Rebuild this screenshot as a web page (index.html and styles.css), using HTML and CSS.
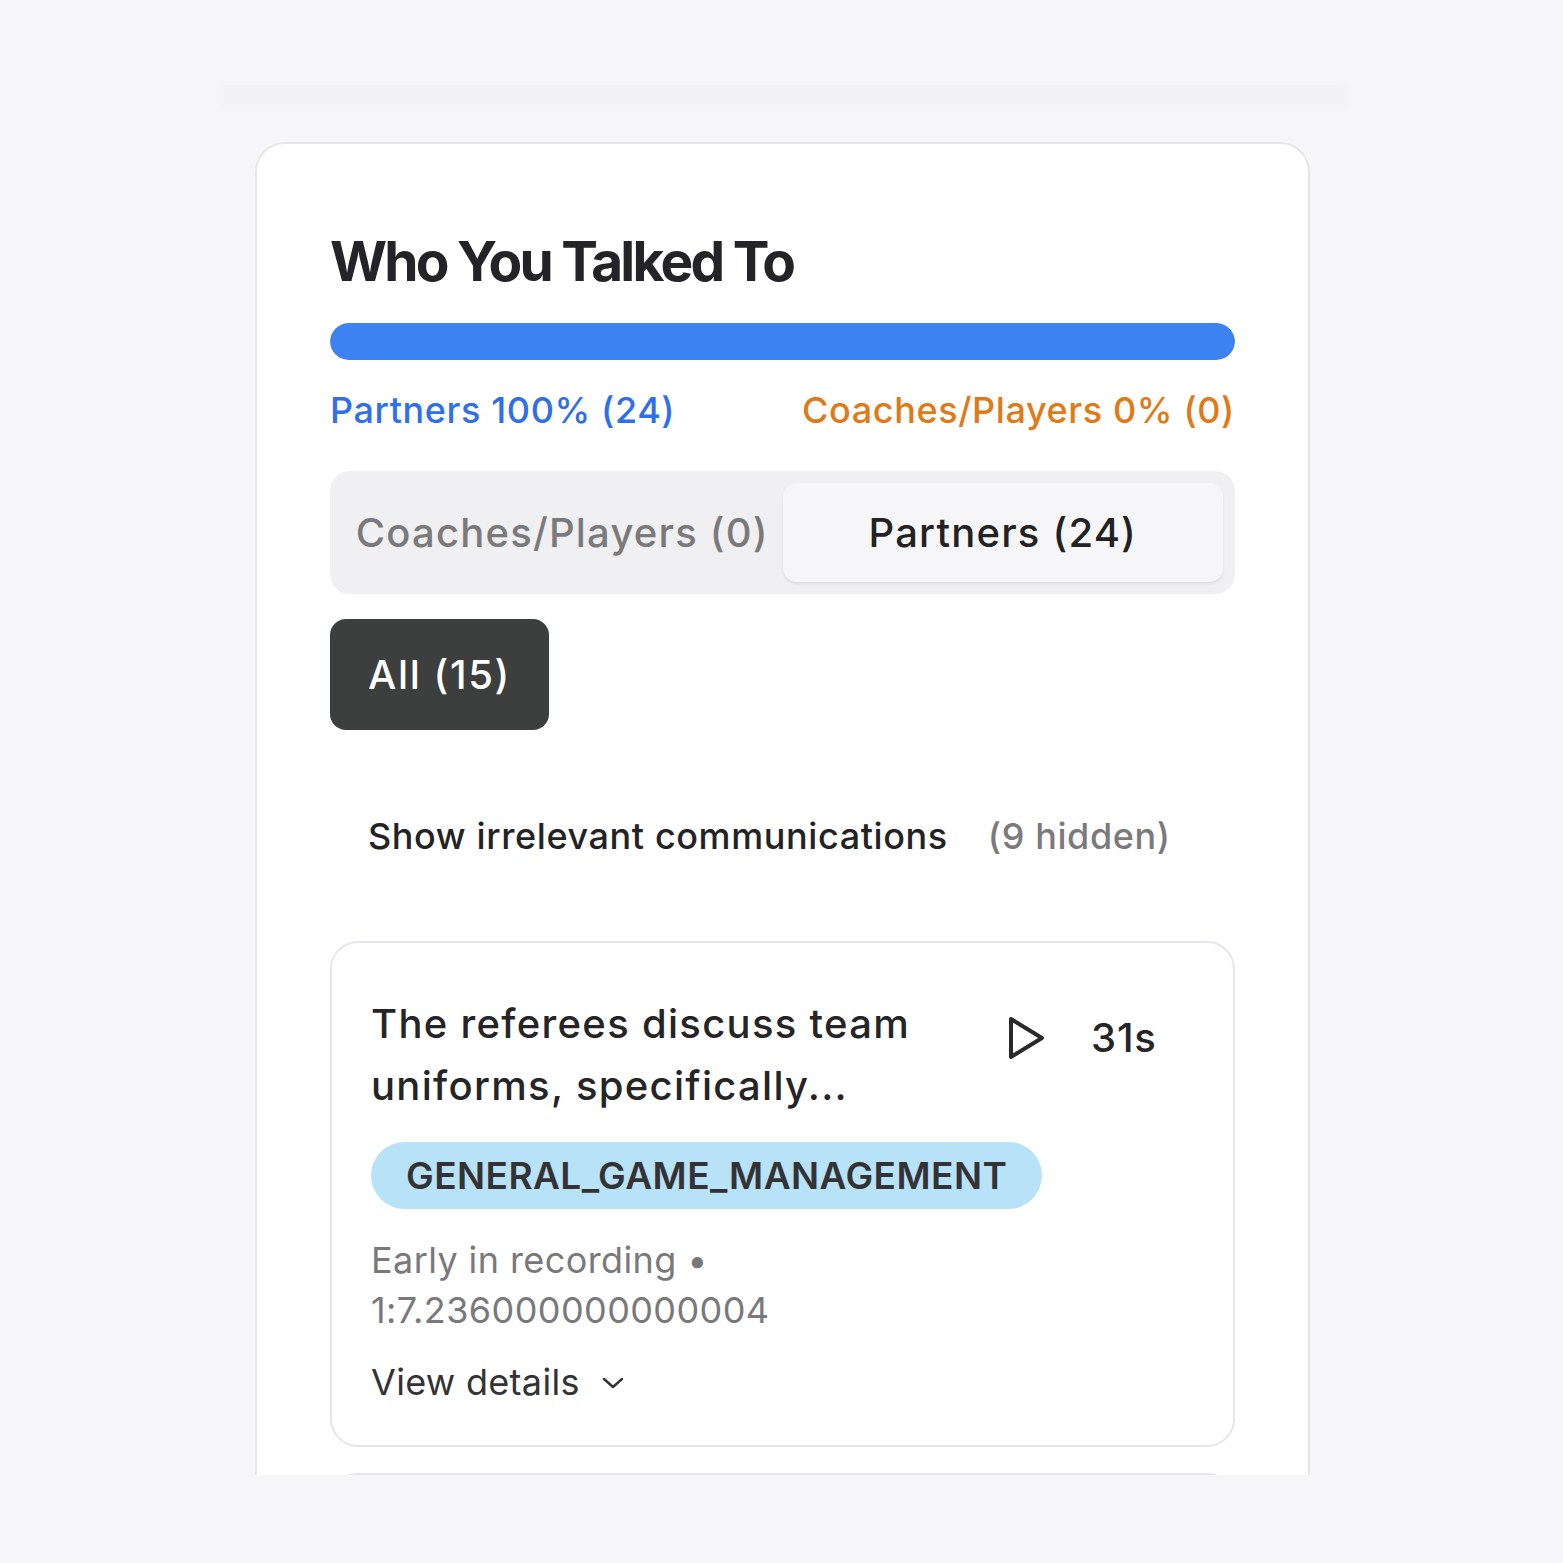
FILE: index.html
```html
<!DOCTYPE html>
<html lang="en">
<head>
<meta charset="utf-8">
<title>Who You Talked To</title>
<link rel="stylesheet" href="styles.css">
</head>
<body>
<div class="viewport">
  <div class="top-band"></div>
  <section class="panel">
    <h1 class="panel-title">Who You Talked To</h1>
    <div class="progress"><div class="progress-fill" style="width:100%"></div></div>
    <div class="stats">
      <span class="stat stat-partners">Partners 100% (24)</span>
      <span class="stat stat-coaches">Coaches/Players 0% (0)</span>
    </div>
    <div class="tabs">
      <button class="tab">Coaches/Players (0)</button>
      <button class="tab tab-active">Partners (24)</button>
    </div>
    <div class="filters">
      <button class="chip chip-active">All (15)</button>
    </div>
    <div class="toggle-row">
      <span class="toggle-label">Show irrelevant communications</span>
      <span class="toggle-count">(9 hidden)</span>
    </div>
    <article class="comm">
      <div class="comm-head">
        <p class="comm-title">The referees discuss team uniforms, specifically...</p>
        <div class="comm-actions">
          <svg class="play" width="40" height="46" viewBox="0 0 40 46" aria-hidden="true">
            <path d="M4 4 L35 23 L4 42 Z" fill="none" stroke="#2a2a2c" stroke-width="4" stroke-linejoin="round"/>
          </svg>
          <span class="duration">31s</span>
        </div>
      </div>
      <span class="tag">GENERAL_GAME_MANAGEMENT</span>
      <p class="comm-meta">Early in recording •<br>1:7.236000000000004</p>
      <div class="details">
        <span>View details</span>
        <svg class="chev" width="26" height="16" viewBox="0 0 26 16" aria-hidden="true">
          <path d="M4 4 L13 12 L22 4" fill="none" stroke="#333" stroke-width="2.4" stroke-linecap="round" stroke-linejoin="round"/>
        </svg>
      </div>
    </article>
    <article class="comm comm-next"></article>
  </section>
</div>
</body>
</html>
```
FILE: styles.css
```css
* { box-sizing: border-box; }
html, body { margin: 0; padding: 0; }
body {
  background: #f6f6f8;
  font-family: Inter, "Noto Sans", "Liberation Sans", sans-serif;
  color: #242426;
}
.viewport {
  height: 1475px;
  overflow: hidden;
  padding-top: 85px;
}
.top-band {
  height: 23px;
  margin: 0 218px 0 220px;
  background: #f2f2f4;
  filter: blur(2px);
}
.panel {
  margin: 34px 253px 0 255px;
  background: #fff;
  border: 2px solid #e6e6ea;
  border-radius: 30px;
  padding: 84px 73px 0 73px;
  min-height: 1600px;
}
.panel-title {
  margin: 0;
  font-size: 55px;
  font-weight: 700;
  letter-spacing: -2.75px;
  line-height: 66px;
  color: #242428;
}
.progress {
  margin-top: 29px;
  height: 37px;
  border-radius: 19px;
  background: #e6e6ea;
  overflow: hidden;
}
.progress-fill {
  height: 100%;
  background: #3d82f2;
  border-radius: 19px;
}
.stats {
  display: flex;
  justify-content: space-between;
  margin-top: 28px;
  font-size: 36px;
  font-weight: 500;
  letter-spacing: 0.6px;
  line-height: 44px;
}
.stat-partners { color: #2f6fe9; }
.stat-coaches { color: #df7a17; }
.tabs {
  margin-top: 39px;
  background: #f0f0f2;
  border-radius: 20px;
  padding: 12px;
  display: grid;
  grid-template-columns: 1fr 1fr;
  height: 123px;
}
.tab {
  border: 0;
  background: transparent;
  font-family: inherit;
  font-size: 40px;
  font-weight: 500;
  letter-spacing: 1.2px;
  color: #7a7a7c;
  border-radius: 14px;
  padding: 0;
}
.tab-active {
  background: #f6f6f8;
  color: #222224;
  box-shadow: 0 2px 3px rgba(0,0,0,0.08);
}
.filters {
  margin-top: 25px;
  display: flex;
}
.chip {
  border: 0;
  font-family: inherit;
  font-size: 40px;
  font-weight: 500;
  letter-spacing: 1.6px;
  height: 111px;
  padding: 0 38px;
  border-radius: 16px;
}
.chip-active {
  background: #3d3e3e;
  color: #fff;
}
.toggle-row {
  display: flex;
  gap: 40px;
  padding-left: 38px;
  margin-top: 81px;
  font-size: 36px;
  font-weight: 500;
  letter-spacing: 0.6px;
  line-height: 50px;
}
.toggle-label { color: #232325; }
.toggle-count { color: #7a7a7c; }
.comm {
  margin-top: 80px;
  border: 2px solid #e6e6ea;
  border-radius: 28px;
  padding: 50px 40px 38px 39px;
}
.comm-head {
  display: flex;
  align-items: flex-start;
}
.comm-title {
  margin: 0;
  width: 600px;
  font-size: 40px;
  font-weight: 500;
  letter-spacing: 1.3px;
  line-height: 62px;
  color: #252527;
}
.comm-actions {
  display: flex;
  align-items: center;
  gap: 44px;
  margin-left: 36px;
  margin-top: 20px;
}
.play { display: block; }
.duration {
  font-size: 40px;
  font-weight: 500;
  letter-spacing: 0.8px;
  color: #252527;
}
.tag {
  display: inline-block;
  margin-top: 25px;
  background: #b8e2f8;
  color: #333335;
  border-radius: 34px;
  height: 67px;
  line-height: 67px;
  padding: 0 35px;
  font-size: 37px;
  font-weight: 600;
  letter-spacing: 0.45px;
}
.comm-meta {
  margin: 26px 0 0;
  font-size: 36px;
  line-height: 50px;
  letter-spacing: 0.4px;
  color: #79797b;
}
.details {
  display: flex;
  align-items: center;
  gap: 20px;
  margin-top: 22px;
  font-size: 36px;
  line-height: 50px;
  letter-spacing: 0.3px;
  color: #333335;
}
.chev { display: block; margin-top: 2px; }
.comm-next {
  margin-top: 26px;
  height: 300px;
}
```
